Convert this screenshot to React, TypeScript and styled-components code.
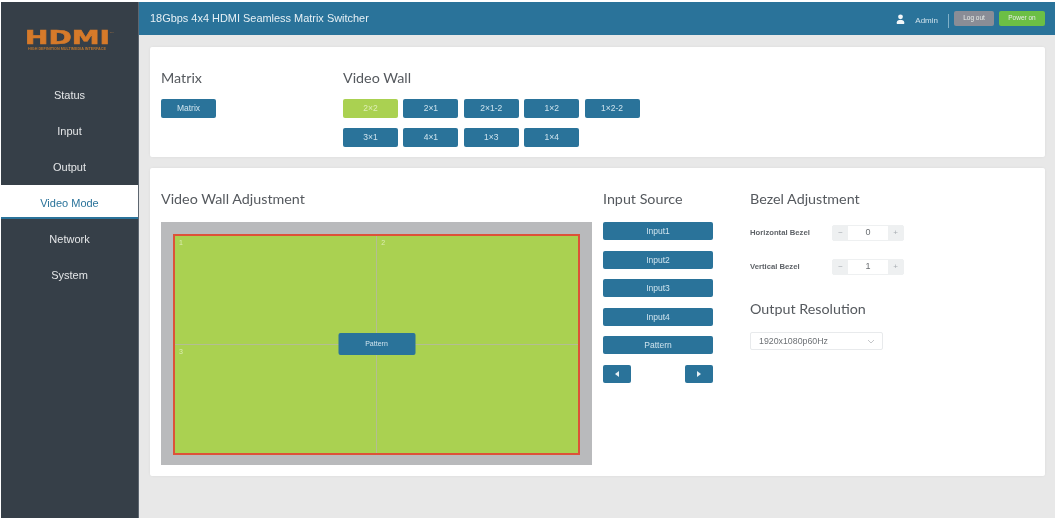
import React from "react";
import styled, { createGlobalStyle } from "styled-components";

const Global = createGlobalStyle`
  html, body { margin: 0; padding: 0; background: #fff; }
  body { font-family: "Liberation Sans", Arial, sans-serif; }
  * { box-sizing: border-box; }
`;

const Page = styled.div`
  width: 1055px;
  height: 520px;
  padding: 2px 0 2px 1px;
  display: flex;
  overflow: hidden;
  filter: blur(0.5px);
`;

const Sidebar = styled.aside`
  width: 138px;
  flex: none;
  background: #363f48;
  border-right: 1px solid #5d6670;
`;

const LogoBlock = styled.div`
  height: 75px;
  padding: 20px 0 0 0;
`;

const NavList = styled.nav`
  display: flex;
  flex-direction: column;
`;

const NavItem = styled.div<{ $active?: boolean }>`
  height: ${(p) => (p.$active ? "34px" : "36px")};
  margin-bottom: ${(p) => (p.$active ? "2px" : "0")};
  line-height: 36px;
  text-align: center;
  font-size: 11px;
  color: ${(p) => (p.$active ? "#2a739a" : "#e4e6e8")};
  background: ${(p) => (p.$active ? "#fff" : "transparent")};
  border-bottom: ${(p) => (p.$active ? "2px solid #2a739a" : "none")};
`;

const Main = styled.div`
  flex: 1;
  display: flex;
  flex-direction: column;
  background: #e8e8e8;
`;

const Header = styled.header`
  height: 33px;
  flex: none;
  background: #2a739a;
  display: flex;
  align-items: center;
  padding: 0 10px 1px 11px;
  color: #e6f0f5;
`;

const Title = styled.div`
  font-size: 10.95px;
  flex: 1;
  margin-top: -1px;
`;

const AdminLabel = styled.span`
  font-size: 8px;
  margin: 5px 10px 0 10px;
  color: #cfe2ec;
`;

const UserIcon = styled.svg`
  margin-top: 2px;
`;

const Divider = styled.span`
  width: 1px;
  height: 14px;
  background: #7fb0c8;
  margin: 5px 5px 0 0;
`;

const HeadBtn = styled.div<{ $bg: string }>`
  height: 15px;
  width: ${(p) => (p.$bg === "#6cbf45" ? "46px" : "40px")};
  margin: 1px 0 0 ${(p) => (p.$bg === "#6cbf45" ? "5px" : "0")};
  background: ${(p) => p.$bg};
  border-radius: 2px;
  color: #e8ece8;
  font-size: 6.5px;
  line-height: 14px;
  text-align: center;
`;

const Content = styled.main`
  flex: 1;
  padding: 12px 10px 0 11px;
  display: flex;
  flex-direction: column;
  gap: 11px;
`;

const Card = styled.section<{ $h: number }>`
  height: ${(p) => p.$h}px;
  background: #fff;
  border-radius: 2px;
  box-shadow: 0 0 3px rgba(0, 0, 0, 0.06);
  display: flex;
  padding: 0 11px;
`;

const Heading = styled.h3`
  margin: 0;
  font-family: Lato, "Open Sans", sans-serif;
  font-weight: 400;
  font-size: 14.3px;
  line-height: 20px;
  color: #55595e;
`;

const TopColumn = styled.div<{ $w?: number }>`
  width: ${(p) => (p.$w ? `${p.$w}px` : "auto")};
  padding-top: 21px;
  display: flex;
  flex-direction: column;
  gap: 11px;
`;

const Btn = styled.div<{ $active?: boolean; $w?: number; $h?: number }>`
  width: ${(p) => (p.$w ? `${p.$w}px` : "55px")};
  height: ${(p) => (p.$h ? `${p.$h}px` : "19px")};
  line-height: ${(p) => (p.$h ? `${p.$h}px` : "19px")};
  background: ${(p) => (p.$active ? "#aad151" : "#2a739a")};
  color: ${(p) => (p.$active ? "#dfeeb8" : "#cfe4ee")};
  border-radius: 2px;
  font-size: 8.5px;
  text-align: center;
`;

const WallGrid = styled.div`
  display: grid;
  grid-template-columns: repeat(5, 55px);
  grid-auto-rows: 19px;
  column-gap: 5.4px;
  row-gap: 10px;
`;

const LeftColumn = styled.div`
  width: 442px;
  padding-top: 21px;
`;

const Wall = styled.div`
  width: 431px;
  height: 243px;
  margin-top: 13px;
  padding: 12px 12px 10px;
  background: #b9babc;
`;

const Screen = styled.div`
  position: relative;
  height: 100%;
  width: 407px;
  border: 2px solid #dd5238;
  display: grid;
  grid-template-columns: 1fr 1fr;
  grid-template-rows: 1fr 1fr;
  gap: 1.5px;
  background: #b3bd93;
`;

const Cell = styled.div`
  padding: 2px 0 0 4px;
  background: #aad151;
  color: #dcecb0;
  font-size: 7px;
  line-height: 9px;
`;

const PatternOverlay = styled.div`
  position: absolute;
  left: 50%;
  top: calc(50% - 1px);
  transform: translate(-50%, -50%);
  width: 77px;
  height: 22px;
  line-height: 21px;
  background: #2a739a;
  border-radius: 2px;
  color: #cfe4ee;
  font-size: 7px;
  text-align: center;
`;

const SourceColumn = styled.div`
  width: 147px;
  padding-top: 21px;
`;

const SourceList = styled.div`
  width: 110px;
  margin-top: 13px;
  display: flex;
  flex-direction: column;
  gap: 10.5px;
`;

const ArrowRow = styled.div`
  display: flex;
  justify-content: space-between;
`;

const ArrowBtn = styled.div`
  width: 28px;
  height: 18px;
  background: #2a739a;
  border-radius: 2px;
  display: flex;
  align-items: center;
  justify-content: center;
`;

const BezelColumn = styled.div`
  padding-top: 21px;
`;

const BezelRow = styled.div`
  display: flex;
  align-items: center;
  height: 16px;
  margin-top: 16px;
  & + & {
    margin-top: 18px;
  }
`;

const BezelLabel = styled.label`
  width: 82px;
  font-size: 7.7px;
  font-weight: 700;
  color: #5f6368;
  margin-top: -1px;
`;

const Stepper = styled.div`
  width: 72px;
  height: 16px;
  display: flex;
  background: #eef0f1;
  border-radius: 2px;
  border: 1px solid #eef0f1;
`;

const StepBtn = styled.div`
  width: 15px;
  line-height: 13px;
  text-align: center;
  font-size: 8px;
  color: #a8adb2;
`;

const StepValue = styled.div`
  flex: 1;
  background: #fff;
  line-height: 13px;
  text-align: center;
  font-size: 9px;
  color: #6a6e72;
`;

const OutputHeading = styled(Heading)`
  margin-top: 24px;
`;

const SelectBox = styled.div`
  width: 133px;
  height: 18px;
  margin-top: 13px;
  border: 1px solid #e8eaec;
  border-radius: 2px;
  padding: 0 7px 0 8px;
  display: flex;
  align-items: center;
  justify-content: space-between;
  font-size: 8.8px;
  color: #6d7175;
`;

const wall = ["2×2", "2×1", "2×1-2", "1×2", "1×2-2", "3×1", "4×1", "1×3", "1×4"];
const nav = ["Status", "Input", "Output", "Video Mode", "Network", "System"];

export default function App() {
  return (
    <Page>
      <Global />
      <Sidebar>
        <LogoBlock>
          <svg width="137" height="34" viewBox="0 0 137 34" role="img" aria-label="HDMI">
            <text
              x="24"
              y="22"
              textLength="85"
              lengthAdjust="spacingAndGlyphs"
              fontFamily="'DejaVu Sans', sans-serif"
              fontWeight="700"
              fontSize="20"
              fill="#d67a2a"
              stroke="#d67a2a"
              strokeWidth="0.6"
            >
              HDMI
            </text>
            <text x="109" y="11" fontFamily="'Liberation Sans', sans-serif" fontSize="2.5" fill="#a9743f">
              TM
            </text>
            <text
              x="27"
              y="28"
              textLength="78"
              lengthAdjust="spacingAndGlyphs"
              fontFamily="'Liberation Sans', sans-serif"
              fontSize="3.2"
              fontWeight="700"
              fill="#b8742f"
            >
              HIGH DEFINITION MULTIMEDIA INTERFACE
            </text>
          </svg>
        </LogoBlock>
        <NavList>
          {nav.map((n) => (
            <NavItem key={n} $active={n === "Video Mode"}>
              {n}
            </NavItem>
          ))}
        </NavList>
      </Sidebar>
      <Main>
        <Header>
          <Title>18Gbps 4x4 HDMI Seamless Matrix Switcher</Title>
          <UserIcon width="9" height="10" viewBox="0 0 9 10" fill="#f2f6f8">
            <circle cx="4.5" cy="2.8" r="2.4" />
            <path d="M0.8 10V8.2C0.8 6.6 2.4 6 4.5 6s3.7.6 3.7 2.2V10z" />
          </UserIcon>
          <AdminLabel>Admin</AdminLabel>
          <Divider />
          <HeadBtn $bg="#8a8d96">Log out</HeadBtn>
          <HeadBtn $bg="#6cbf45">Power on</HeadBtn>
        </Header>
        <Content>
          <Card $h={110}>
            <TopColumn $w={182}>
              <Heading>Matrix</Heading>
              <Btn>Matrix</Btn>
            </TopColumn>
            <TopColumn>
              <Heading>Video Wall</Heading>
              <WallGrid>
                {wall.map((w, i) => (
                  <Btn key={w} $active={i === 0}>
                    {w}
                  </Btn>
                ))}
              </WallGrid>
            </TopColumn>
          </Card>
          <Card $h={308}>
            <LeftColumn>
              <Heading>Video Wall Adjustment</Heading>
              <Wall>
                <Screen>
                  <Cell>1</Cell>
                  <Cell>2</Cell>
                  <Cell>3</Cell>
                  <Cell />
                  <PatternOverlay>Pattern</PatternOverlay>
                </Screen>
              </Wall>
            </LeftColumn>
            <SourceColumn>
              <Heading>Input Source</Heading>
              <SourceList>
                {["Input1", "Input2", "Input3", "Input4", "Pattern"].map((s) => (
                  <Btn key={s} $w={110} $h={18}>
                    {s}
                  </Btn>
                ))}
                <ArrowRow>
                  <ArrowBtn>
                    <svg width="4" height="6" viewBox="0 0 4 6" fill="#e6f0f5">
                      <path d="M4 0v6L0 3z" />
                    </svg>
                  </ArrowBtn>
                  <ArrowBtn>
                    <svg width="4" height="6" viewBox="0 0 4 6" fill="#e6f0f5">
                      <path d="M0 0v6l4-3z" />
                    </svg>
                  </ArrowBtn>
                </ArrowRow>
              </SourceList>
            </SourceColumn>
            <BezelColumn>
              <Heading>Bezel Adjustment</Heading>
              <BezelRow>
                <BezelLabel>Horizontal Bezel</BezelLabel>
                <Stepper>
                  <StepBtn>−</StepBtn>
                  <StepValue>0</StepValue>
                  <StepBtn>+</StepBtn>
                </Stepper>
              </BezelRow>
              <BezelRow>
                <BezelLabel>Vertical Bezel</BezelLabel>
                <Stepper>
                  <StepBtn>−</StepBtn>
                  <StepValue>1</StepValue>
                  <StepBtn>+</StepBtn>
                </Stepper>
              </BezelRow>
              <OutputHeading>Output Resolution</OutputHeading>
              <SelectBox>
                1920x1080p60Hz
                <svg width="8" height="5" viewBox="0 0 8 5" fill="none" stroke="#b5b8bb" strokeWidth="0.8">
                  <path d="M1 1l3 3 3-3" />
                </svg>
              </SelectBox>
            </BezelColumn>
          </Card>
        </Content>
      </Main>
    </Page>
  );
}
